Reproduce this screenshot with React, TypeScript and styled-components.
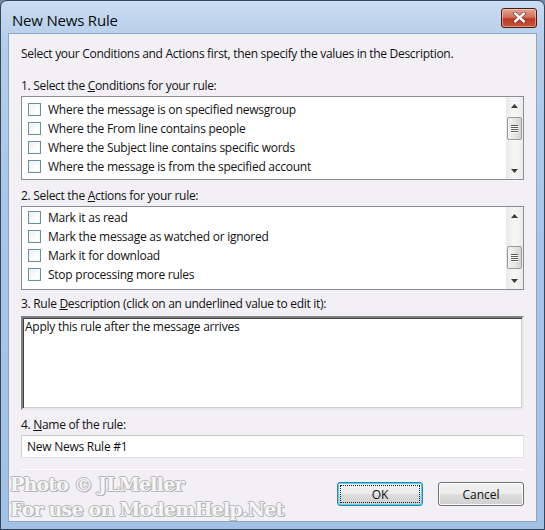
import React from "react";
import styled, { createGlobalStyle } from "styled-components";

const Global = createGlobalStyle`
  html, body { margin: 0; padding: 0; background: #6f8aa8; }
  * { box-sizing: border-box; }
`;

const FONT = `"Open Sans", "Noto Sans", "Liberation Sans", sans-serif`;

const Window = styled.div`
  position: relative;
  width: 545px;
  height: 530px;
  border: 1px solid #34465a;
  border-radius: 7px 7px 0 0;
  background: linear-gradient(180deg, #c9dcf1 0%, #b4cdea 8%, #a9c6e8 40%, #a3c1e4 100%);
  display: flex;
  flex-direction: column;
  overflow: hidden;
  font-family: ${FONT};
`;

const TitleBar = styled.div`
  height: 32px;
  display: flex;
  align-items: center;
  justify-content: space-between;
  padding: 0 3px 0 11px;
`;

const Title = styled.span`
  font-size: 15px;
  color: #0b0b0b;
  letter-spacing: -0.2px;
  margin-top: 5px;
`;

const CloseBtn = styled.div`
  width: 36px;
  height: 20px;
  margin-top: 1px;
  margin-right: 4px;
  border: 1px solid #4a1a14;
  border-radius: 3px;
  background: linear-gradient(180deg, #e3a596 0%, #d2705a 45%, #b63b22 55%, #c9563a 100%);
  box-shadow: inset 0 0 0 1px rgba(255, 220, 210, 0.5);
  display: flex;
  align-items: center;
  justify-content: center;
`;

const Client = styled.div`
  flex: 1;
  margin: 0 7px 7px 7px;
  background: #f2f0f5;
  border: 1px solid #8ea6c2;
  padding: 12px 12px 0 12px;
  display: flex;
  flex-direction: column;
  font-size: 12px;
  color: #111;
`;

const Text = styled.div<{ $mt?: number }>`
  line-height: 16px;
  height: 16px;
  margin-top: ${(p) => p.$mt ?? 0}px;
  white-space: nowrap;
  letter-spacing: -0.3px;
`;

const U = styled.span`
  text-decoration: underline;
`;

const ListBox = styled.div<{ $mt: number; $h: number }>`
  margin-top: ${(p) => p.$mt}px;
  height: ${(p) => p.$h}px;
  border: 1px solid #8a8d93;
  background: #fff;
  display: flex;
`;

const Items = styled.div<{ $pt: number }>`
  flex: 1;
  padding: ${(p) => p.$pt}px 0 0 6px;
`;

const Item = styled.div`
  height: 19px;
  display: flex;
  align-items: center;
  gap: 7px;
  white-space: nowrap;
  letter-spacing: -0.25px;
`;

const Check = styled.span`
  width: 13px;
  height: 13px;
  border: 1px solid #6b8f9c;
  background: linear-gradient(135deg, #e8eef2 0%, #ffffff 70%);
  box-shadow: inset 0 0 0 1px #f4f6f8;
  flex: none;
`;

const ScrollBar = styled.div`
  width: 17px;
  background: linear-gradient(90deg, #e9e9e9, #f7f7f7 50%, #ececec);
  display: flex;
  flex-direction: column;
`;

const Arrow = styled.div`
  height: 17px;
  display: flex;
  align-items: center;
  justify-content: center;
`;

const Track = styled.div<{ $top: number }>`
  flex: 1;
  padding-top: ${(p) => p.$top}px;
`;

const Thumb = styled.div`
  height: 23px;
  margin: 0 1px;
  border: 1px solid #9a9a9a;
  border-radius: 2px;
  background: linear-gradient(90deg, #f4f4f4 0%, #e6e6e6 50%, #d4d4d4 100%);
  display: flex;
  flex-direction: column;
  align-items: center;
  justify-content: center;
  gap: 1px;
`;

const Grip = styled.span`
  width: 7px;
  height: 1px;
  background: #5a5a5a;
  box-shadow: 0 1px 0 #fff;
`;

const DescBox = styled.div`
  margin-top: 4px;
  height: 94px;
  background: #fff;
  border: 2px solid;
  border-color: #808080 #e8e8e8 #e8e8e8 #808080;
  box-shadow: inset 1px 1px 0 #404040, inset -1px -1px 0 #d4d0c8;
  padding: 0 2px;
  line-height: 17px;
  letter-spacing: -0.25px;
`;

const Input = styled.div`
  margin-top: 2px;
  height: 23px;
  background: #fff;
  border: 1px solid;
  border-color: #c6c6c6 #e3e3e3 #e3e3e3 #d0d0d0;
  display: flex;
  align-items: center;
  padding-left: 5px;
  letter-spacing: -0.25px;
`;

const Separator = styled.div`
  margin-top: 11px;
  height: 1px;
  background: #a0a0a0;
  border-bottom: 1px solid #fff;
`;

const ButtonRow = styled.div`
  margin-top: 12px;
  display: flex;
  justify-content: flex-end;
  gap: 15px;
`;

const Button = styled.div<{ $default?: boolean }>`
  width: 86px;
  height: 24px;
  border: 1px solid ${(p) => (p.$default ? "#3c7fb1" : "#707070")};
  border-radius: 3px;
  background: linear-gradient(180deg, #f2f2f2 0%, #ebebeb 49%, #dddddd 51%, #cfcfcf 100%);
  box-shadow: inset 0 0 0 1px ${(p) => (p.$default ? "#48d8fb" : "#fcfcfc")};
  display: flex;
  align-items: center;
  justify-content: center;
  position: relative;
  &::after {
    content: "";
    display: ${(p) => (p.$default ? "block" : "none")};
    position: absolute;
    inset: 2px;
    border: 1px dotted #222;
  }
`;

const Watermark = styled.div`
  position: absolute;
  left: 9px;
  top: 471px;
  font-family: "DejaVu Serif", "Liberation Serif", serif;
  font-weight: bold;
  font-size: 19px;
  line-height: 25px;
  color: #f6f6f6;
  letter-spacing: -0.8px;
  text-shadow: 1px 0 0 #b8b8b8, -1px 0 0 #b8b8b8, 0 1px 0 #b8b8b8, 0 -1px 0 #b8b8b8,
    1px 1px 0 #a8a8a8;
  pointer-events: none;
  white-space: nowrap;
`;

const UpArrow = () => (
  <svg width="7" height="4" viewBox="0 0 7 4">
    <path d="M3.5 0 L7 4 L0 4 Z" fill="#3c3c3c" />
  </svg>
);
const DownArrow = () => (
  <svg width="7" height="4" viewBox="0 0 7 4">
    <path d="M0 0 L7 0 L3.5 4 Z" fill="#3c3c3c" />
  </svg>
);

function List({
  items,
  thumbTop,
  mt,
  h,
  pt,
}: {
  items: string[];
  thumbTop: number;
  mt: number;
  h: number;
  pt: number;
}) {
  return (
    <ListBox $mt={mt} $h={h}>
      <Items $pt={pt}>
        {items.map((t) => (
          <Item key={t}>
            <Check />
            {t}
          </Item>
        ))}
      </Items>
      <ScrollBar>
        <Arrow>
          <UpArrow />
        </Arrow>
        <Track $top={thumbTop}>
          <Thumb>
            <Grip />
            <Grip />
            <Grip />
            <Grip />
          </Thumb>
        </Track>
        <Arrow>
          <DownArrow />
        </Arrow>
      </ScrollBar>
    </ListBox>
  );
}

export default function App() {
  return (
    <>
      <Global />
      <Window>
        <TitleBar>
          <Title>New News Rule</Title>
          <CloseBtn>
            <svg width="13" height="11" viewBox="0 0 13 11">
              <path
                d="M2 1.5 L11 9.5 M11 1.5 L2 9.5"
                stroke="#5a1a10"
                strokeWidth="3.6"
                strokeLinecap="round"
              />
              <path
                d="M2 1.5 L11 9.5 M11 1.5 L2 9.5"
                stroke="#ffffff"
                strokeWidth="2.4"
                strokeLinecap="round"
              />
            </svg>
          </CloseBtn>
        </TitleBar>
        <Client>
          <Text>Select your Conditions and Actions first, then specify the values in the Description.</Text>
          <Text $mt={16}>
            1. Select the <U>C</U>onditions for your rule:
          </Text>
          <List
            mt={2}
            h={84}
            pt={3}
            thumbTop={3}
            items={[
              "Where the message is on specified newsgroup",
              "Where the From line contains people",
              "Where the Subject line contains specific words",
              "Where the message is from the specified account",
            ]}
          />
          <Text $mt={8}>
            2. Select the <U>A</U>ctions for your rule:
          </Text>
          <List
            mt={2}
            h={84}
            pt={1}
            thumbTop={22}
            items={[
              "Mark it as read",
              "Mark the message as watched or ignored",
              "Mark it for download",
              "Stop processing more rules",
            ]}
          />
          <Text $mt={6}>
            3. Rule <U>D</U>escription (click on an underlined value to edit it):
          </Text>
          <DescBox>Apply this rule after the message arrives</DescBox>
          <Text $mt={7}>
            4. <U>N</U>ame of the rule:
          </Text>
          <Input>New News Rule #1</Input>
          <Separator />
          <ButtonRow>
            <Button $default>OK</Button>
            <Button>Cancel</Button>
          </ButtonRow>
        </Client>
        <Watermark>
          Photo © JLMeller
          <br />
          For use on ModemHelp.Net
        </Watermark>
      </Window>
    </>
  );
}
